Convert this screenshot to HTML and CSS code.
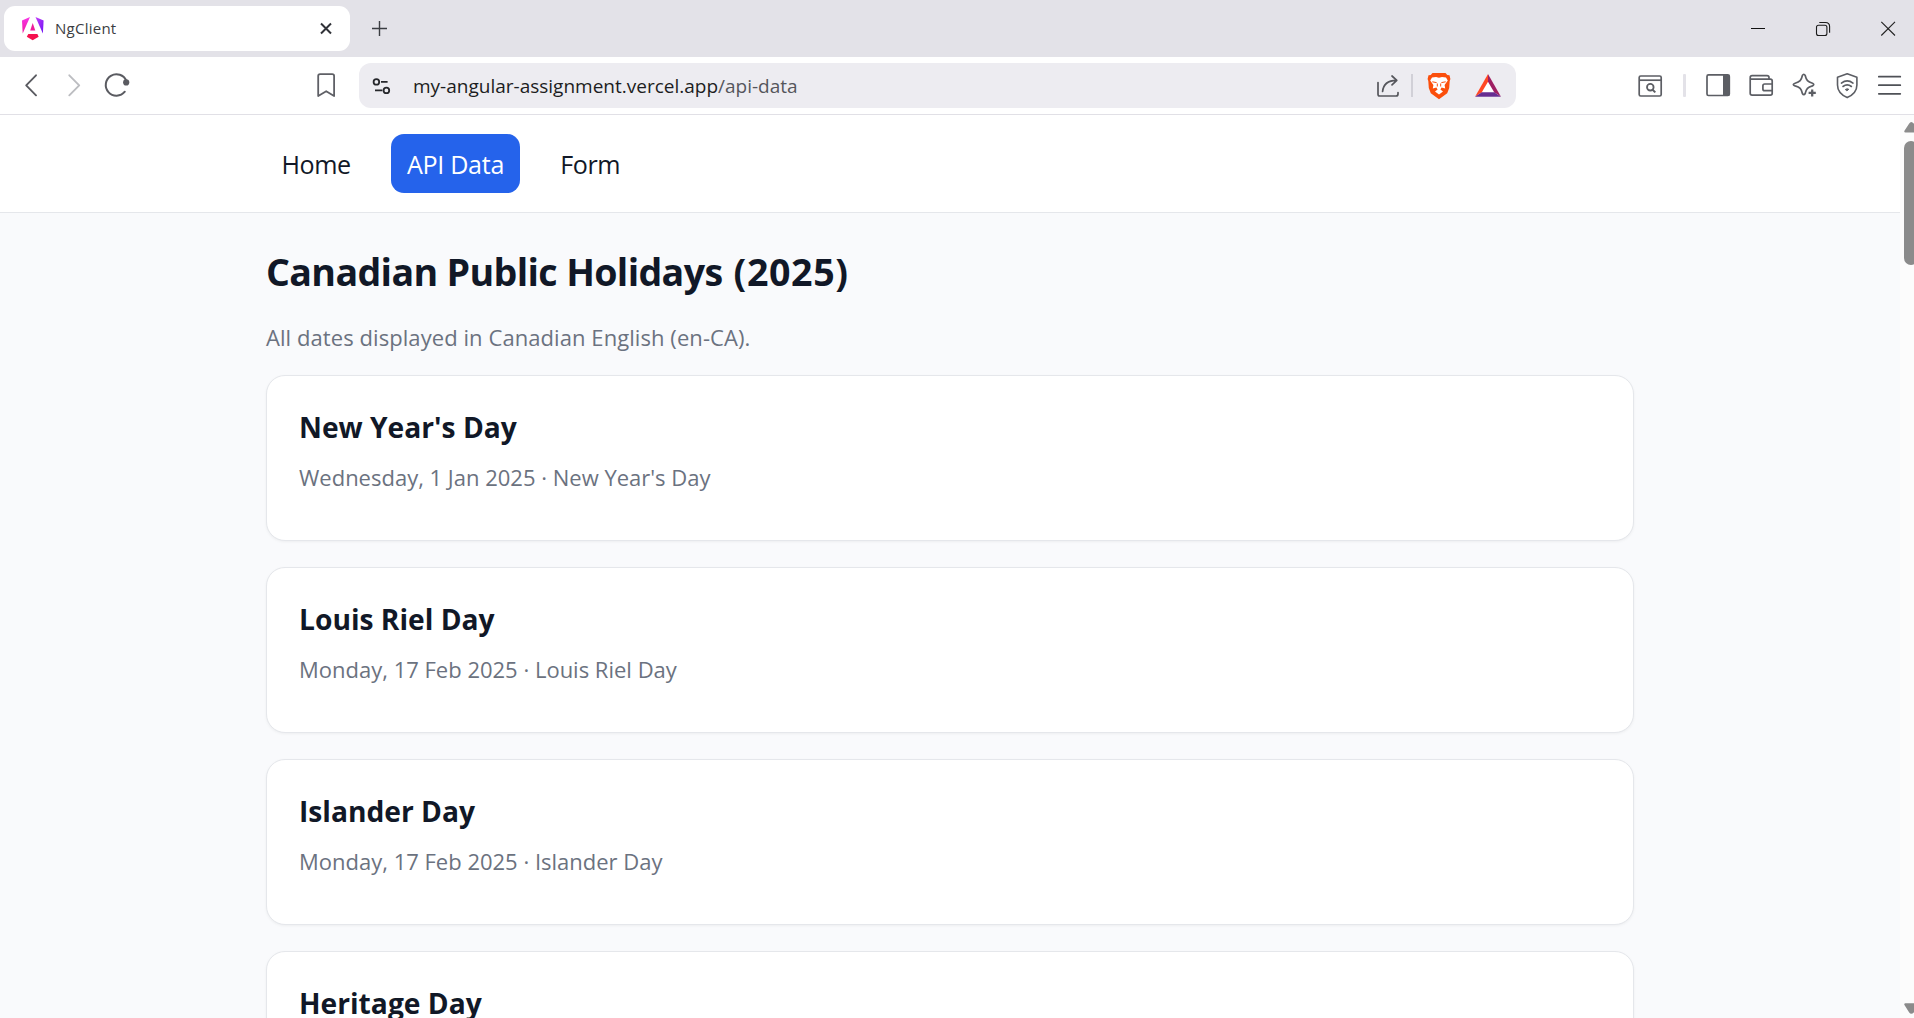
FILE: index.html
```html
<!DOCTYPE html>
<html lang="en">
<head>
<meta charset="utf-8">
<title>NgClient</title>
<link rel="stylesheet" href="styles.css">
</head>
<body>
<div class="browser">
  <div class="tabstrip">
    <div class="tab">
      <svg class="favicon" width="24" height="25" viewBox="21 16 24 25">
        <defs>
          <linearGradient id="ngl" x1="0" y1="0" x2="0" y2="1"><stop offset="0" stop-color="#f637e8"/><stop offset="1" stop-color="#f0189e"/></linearGradient>
          <linearGradient id="ngr" x1="0" y1="0" x2="1" y2="1"><stop offset="0" stop-color="#c63cf8"/><stop offset="1" stop-color="#6b12f5"/></linearGradient>
        </defs>
        <path fill="url(#ngl)" d="M30 17L22 20.5L22.7 33.5Z"/>
        <path fill="url(#ngr)" d="M35.5 17L43.6 20.5L42.9 33.5Z"/>
        <path fill="#ee1b9a" d="M32.7 23L30.2 30.5H35.3Z"/>
        <path fill="#f5124f" d="M28.3 34H37.4L38.7 36.7L32.7 40.2L26.8 36.7Z"/>
      </svg>
      <span class="tab-title">NgClient</span>
      <svg class="tab-close" width="14" height="14" viewBox="0 0 14 14"><path d="M2 1.5L12 11.5M12 1.5L2 11.5" stroke="#303238" stroke-width="2"/></svg>
    </div>
    <svg class="new-tab" width="17" height="17" viewBox="0 0 17 17"><path d="M8.5 1V16M1 8.5H16" stroke="#3b3d42" stroke-width="1.4"/></svg>
    <div class="window-controls">
      <svg width="16" height="16" viewBox="1750 20 16 16"><path d="M1751 27.5H1765" stroke="#111" stroke-width="1"/></svg>
      <svg width="16" height="16" viewBox="1815 20 16 16" fill="none" stroke="#1b1b1b" stroke-width="1.1"><rect x="1816.5" y="24.3" width="10.4" height="10.2" rx="2"/><path d="M1819.3 21.5H1825.5Q1829.6 21.5 1829.6 25.6V31.8"/></svg>
      <svg width="16" height="16" viewBox="1880 20.5 16 16"><path d="M1881.3 21.3L1895 35M1895 21.3L1881.3 35" stroke="#222" stroke-width="1.1"/></svg>
    </div>
  </div>

  <div class="toolbar">
    <svg width="16" height="29" viewBox="24 71 16 29" fill="none" stroke="#5a5b61" stroke-width="1.9" stroke-linecap="round" stroke-linejoin="round"><path d="M36 75.3L26.2 85.3L36 95.3"/></svg>
    <svg class="forward" width="16" height="29" viewBox="66 71 16 29" fill="none" stroke="#bcbdc1" stroke-width="1.9" stroke-linecap="round" stroke-linejoin="round"><path d="M69.3 75.3L79.2 85.3L69.3 95.3"/></svg>
    <svg class="reload" width="28" height="29" viewBox="103 71 28 29" fill="none" stroke="#5a5b61" stroke-width="2" stroke-linecap="round"><path d="M124.8 91.7A10.7 10.7 0 1 1 126.4 81"/><circle cx="126.2" cy="82.4" r="3.1" fill="#5a5b61" stroke="none"/></svg>
    <svg class="bookmark" width="24" height="29" viewBox="314 71 24 29" fill="none" stroke="#5f6066" stroke-width="1.8" stroke-linejoin="round"><path d="M318.2 96V76Q318.2 74.1 320.1 74.1H332.2Q334.1 74.1 334.1 76V96L326.2 91.2Z"/></svg>

    <div class="omnibox">
      <svg width="21" height="29" viewBox="371 71 21 29" fill="none" stroke="#26272b" stroke-width="1.8"><circle cx="376.4" cy="81.9" r="2.8"/><path d="M381 81.9H387.6M375 90.4H382.4"/><circle cx="386.4" cy="90.4" r="2.8"/></svg>
      <div class="url">my-angular-assignment.vercel.app<span class="path">/api-data</span></div>
      <svg class="share" width="26" height="29" viewBox="1375 71 26 29" fill="none" stroke="#55565c" stroke-width="1.7" stroke-linecap="round" stroke-linejoin="round"><path d="M1378 82.5V94.3Q1378 96 1379.7 96H1396Q1398 96 1398 94V92.5M1382.6 91.5C1383.2 84.5 1387 80.4 1396.5 80.3M1392 76L1396.8 80.3L1392 84.8"/></svg>
      <div class="divider"></div>
      <svg class="brave" width="26" height="29" viewBox="1426 71 26 29"><path fill="#fb4f0c" d="M1432.5 73H1445.5L1447.3 75L1449.5 75.3L1450.4 79L1449.7 81L1449.2 88L1447.2 93.2L1439 99.2L1430.8 93.2L1428.8 88L1428.3 81L1427.6 79L1428.5 75.3L1430.7 75Z"/><path fill="#fff" d="M1432 77.6L1436 77L1439 77.8L1442 77L1446 77.6L1447.8 80.5L1444.6 85L1445.2 88.6L1441.6 87.4L1440.4 89.6L1443 91.4L1439 94.4L1435 91.4L1437.6 89.6L1436.4 87.4L1432.8 88.6L1433.4 85L1430.2 80.5Z"/><path d="M1432.3 81.8L1436.6 82.6M1445.7 81.8L1441.4 82.6M1437.3 83.5V86.5M1440.7 83.5V86.5" fill="none" stroke="#fb4f0c" stroke-width="1"/></svg>
      <svg class="bat" width="28" height="29" viewBox="1474 71 28 29"><path fill="#fff" d="M1488 74L1501 96.8H1475Z"/><path fill="#ff4724" d="M1488 74V81.8L1481.8 92.2L1475 96.8Z"/><path fill="#9e1f63" d="M1488 74L1501 96.8L1494.2 92.2L1488 81.8Z"/><path fill="#662d91" d="M1475 96.8L1481.8 92.2H1494.2L1501 96.8Z"/></svg>
    </div>

    <div class="actions">
      <svg width="28" height="29" viewBox="1636 71 28 29" fill="none" stroke="#5c5e64" stroke-width="1.7"><rect x="1639.2" y="76" width="22" height="20" rx="1.5"/><path d="M1639 80.2H1661.5"/><circle cx="1650.3" cy="87.2" r="3.3" stroke-width="1.8"/><path d="M1652.6 89.7L1655.3 92.4" stroke-width="2"/></svg>
      <div class="separator"></div>
      <svg class="panel" width="28" height="29" viewBox="1704 71 28 29" fill="none" stroke="#5c5e64" stroke-width="1.7"><rect x="1707" y="74.9" width="22.3" height="20.6" rx="1.5"/><path fill="#5c5e64" stroke="none" d="M1723 75H1729.5V95.5H1723Z"/></svg>
      <svg class="wallet" width="28" height="29" viewBox="1747 71 28 29" fill="none" stroke="#5c5e64" stroke-width="1.7" stroke-linejoin="round"><path d="M1750.2 78V93.3Q1750.2 95.2 1752.1 95.2H1770.3Q1772.2 95.2 1772.2 93.3V81Q1772.2 79.2 1770.3 79.2H1751.5Q1750.2 79.2 1750.2 77.5Q1750.2 75.7 1752.1 75.7H1767Q1769 75.7 1769 77.5V79M1772.2 84H1764.7Q1762.9 84 1762.9 85.8V88.9Q1762.9 90.7 1764.7 90.7H1772.2"/></svg>
      <svg class="sparkle" width="28" height="29" viewBox="1791 71 28 29" fill="none" stroke="#5c5e64" stroke-width="1.7" stroke-linejoin="round"><path d="M1802.4 75.5Q1803.8 73 1805.2 75.5C1806.4 80.4 1807.6 81.9 1812.5 83.2Q1815 84.5 1812.5 85.9C1807.6 87.1 1806.4 88.6 1805.2 93.5Q1803.8 96 1802.4 93.5C1801.2 88.6 1800 87.1 1795.1 85.9Q1791.5 84.5 1795.1 83.2C1800 81.9 1801.2 80.4 1802.4 75.5Z"/><path fill="#5c5e64" stroke="#fff" stroke-width="1.2" d="M1812.2 87.8Q1812.9 92.2 1817 92.9Q1812.9 93.6 1812.2 98Q1811.5 93.6 1807.2 92.9Q1811.5 92.2 1812.2 87.8Z"/><path stroke-width="2.2" d="M1812.2 89.4V96.4M1808.6 92.9H1815.8"/></svg>
      <svg class="shield" width="28" height="29" viewBox="1834 71 28 29" fill="none" stroke="#5c5e64" stroke-width="1.6" stroke-linecap="round" stroke-linejoin="round"><path d="M1847.2 73.8L1856.9 77.2V85C1856.9 91.6 1853 95 1847.2 97.6C1841.4 95 1837.5 91.6 1837.5 85V77.2Z"/><path d="M1841.4 83.1Q1847.2 78.7 1853 83.1M1843 86.5Q1847.2 83.3 1851.4 86.5"/><path d="M1845.6 89.3Q1847.2 88.2 1848.8 89.3L1847.2 90.6Z" fill="#5c5e64" stroke-width="1"/></svg>
      <svg class="menu" width="28" height="29" viewBox="1876 71 28 29" stroke="#4f5157" stroke-width="1.7" stroke-linecap="round"><path d="M1878.8 76.7H1900.3M1878.8 85.2H1900.3M1878.8 93.8H1900.3"/></svg>
    </div>
  </div>

  <div class="viewport">
    <div class="page">
      <header class="site-header">
        <nav class="nav container">
          <a class="nav-link">Home</a>
          <a class="nav-link active">API Data</a>
          <a class="nav-link">Form</a>
        </nav>
      </header>
      <main class="container content">
        <h1>Canadian Public Holidays <span class="year">(2025)</span></h1>
        <p class="intro">All dates displayed in Canadian English (en-CA).</p>
        <div class="cards">
          <article class="card"><h2>New Year's Day</h2><p>Wednesday, 1 Jan 2025 · New Year's Day</p></article>
          <article class="card"><h2>Louis Riel Day</h2><p>Monday, 17 Feb 2025 · Louis Riel Day</p></article>
          <article class="card"><h2>Islander Day</h2><p>Monday, 17 Feb 2025 · Islander Day</p></article>
          <article class="card"><h2>Heritage Day</h2></article>
        </div>
      </main>
    </div>
    <div class="scrollbar">
      <svg width="10" height="11" viewBox="1904 122 10 11"><path fill="#8b8b8b" d="M1904.3 131Q1904 132.6 1905.5 132.6H1914V123.8Q1911 120.5 1909.2 123.6Z"/></svg>
      <div class="thumb"></div>
      <svg class="down" width="10" height="11" viewBox="1904 1003 10 11"><path fill="#8b8b8b" d="M1905.5 1003.2H1914V1012.2Q1911 1015.3 1909.2 1012.4L1904.3 1004.8Q1904 1003.2 1905.5 1003.2Z"/></svg>
    </div>
  </div>
</div>
</body>
</html>
```
FILE: styles.css
```css
* { box-sizing: border-box; }

body {
  margin: 0;
  overflow: hidden;
  font-family: "Open Sans", "Noto Sans", sans-serif;
  color: #111827;
}

h1, h2, p { margin: 0; }
svg { display: block; flex: none; }

.browser {
  display: flex;
  flex-direction: column;
  height: 1018px;
}

/* Tab strip */
.tabstrip {
  display: flex;
  align-items: center;
  flex: none;
  height: 57px;
  padding: 0 18px 0 4px;
  background: #e3e2e8;
}

.tab {
  display: flex;
  align-items: center;
  width: 346px;
  height: 45px;
  padding: 0 17px;
  border-radius: 11px;
  background: #fff;
}

.tab-title {
  margin-left: 10px;
  padding-bottom: 1px;
  font-size: 15px;
  line-height: 20px;
  letter-spacing: 0.25px;
  color: #3b3d42;
}

.tab-close { margin-left: auto; }
.new-tab { margin-left: 21px; }

.window-controls {
  display: flex;
  gap: 49px;
  margin-left: auto;
}

/* Toolbar */
.toolbar {
  display: flex;
  align-items: center;
  flex: none;
  height: 58px;
  padding: 0 10px 0 24px;
  border-bottom: 1px solid #e1e0e6;
  background: #fff;
}

.forward { margin-left: 26px; }
.reload { margin-left: 21px; }
.bookmark { margin-left: 183px; }

.omnibox {
  display: flex;
  align-items: center;
  width: 1157px;
  height: 45px;
  margin-left: 21px;
  padding: 0 14px 0 12px;
  border-radius: 12px;
  background: #edecf1;
}

.url {
  margin: 0 auto 0 21px;
  padding-top: 2px;
  font-size: 19px;
  line-height: 27px;
  color: #1c1d21;
}

.path { color: #55565c; }

.divider {
  width: 2px;
  height: 23px;
  margin-left: 10px;
  background: #d1d0d7;
}

.brave { margin-left: 13px; }
.bat { margin-left: 22px; }

.actions {
  display: flex;
  align-items: center;
  margin-left: auto;
}

.separator {
  width: 3px;
  height: 23px;
  margin-left: 19px;
  border-radius: 1px;
  background: #e3e2e8;
}

.panel { margin-left: 18px; }
.wallet { margin-left: 15px; }
.sparkle { margin-left: 16px; }
.shield { margin-left: 15px; }
.menu { margin-left: 14px; }

/* Page */
.viewport {
  display: flex;
  flex: 1;
  min-height: 0;
}

.page {
  flex: 1;
  overflow: hidden;
  background: #f9fafc;
}

.container {
  width: 1368px;
  margin: 0 auto;
}

.site-header {
  height: 98px;
  padding-top: 19px;
  border-bottom: 1px solid #e5e7eb;
  background: #fff;
}

.nav {
  display: flex;
  gap: 25px;
}

.nav-link {
  padding: 2px 15.4px 0;
  border-radius: 13px;
  font-size: 25.1px;
  line-height: 57px;
  letter-spacing: -0.4px;
}

.nav-link.active {
  padding: 2px 15.8px 0;
  letter-spacing: -0.3px;
  background: #2563eb;
  color: #fff;
}

.content { padding-top: 36px; }

h1 {
  font-size: 37.6px;
  line-height: 46px;
  letter-spacing: -0.65px;
}

.year {
  margin-left: 2px;
  letter-spacing: 0.6px;
}

.intro {
  margin: 25px 0 21px;
  font-size: 22px;
  line-height: 34px;
  letter-spacing: 0.07px;
  color: #6b7280;
}

.cards {
  display: flex;
  flex-direction: column;
  gap: 26px;
}

.card {
  height: 166px;
  padding: 31px 32px;
  border: 1px solid #e5e7eb;
  border-radius: 19px;
  background: #fff;
  box-shadow: 0 1px 3px rgba(0, 0, 0, 0.05);
}

.card h2 {
  font-size: 28.2px;
  line-height: 40px;
}

.card p {
  margin-top: 13px;
  font-size: 22px;
  line-height: 34px;
  color: #6b7280;
}

/* Scrollbar */
.scrollbar {
  display: flex;
  flex-direction: column;
  width: 14px;
  padding: 7px 0 4px 4px;
  overflow: hidden;
  background: #fcfcfc;
}

.thumb {
  width: 14px;
  height: 124px;
  margin-top: 8px;
  border-radius: 7px;
  background: #8b8b8b;
}

.down { margin-top: auto; }
```
